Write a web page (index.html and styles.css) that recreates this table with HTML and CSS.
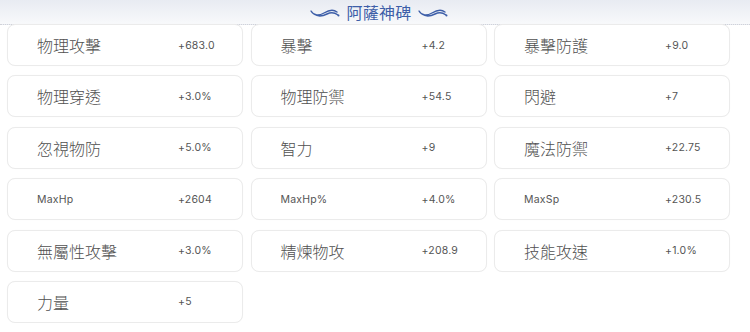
FILE: index.html
```html
<!DOCTYPE html>
<html>
<head>
<meta charset="utf-8">
<link rel="stylesheet" href="styles.css">
</head>
<body>
<div class="header">
  <svg class="swoosh" viewBox="0 0 30 12" width="30" height="12"><path d="M1 4 C4 9 9 9 14 6 C19 3 23 2 27 5 M4 7 C8 10 13 9 17 7 C21 5 24 5 28 8" fill="none" stroke="#3d5ea8" stroke-width="1.4" stroke-linecap="round"/><circle cx="28.5" cy="8.5" r="1" fill="#3d5ea8"/></svg>
  <span class="title">阿薩神碑</span>
  <svg class="swoosh" viewBox="0 0 30 12" width="30" height="12"><path d="M1 4 C4 9 9 9 14 6 C19 3 23 2 27 5 M4 7 C8 10 13 9 17 7 C21 5 24 5 28 8" fill="none" stroke="#3d5ea8" stroke-width="1.4" stroke-linecap="round"/><circle cx="28.5" cy="8.5" r="1" fill="#3d5ea8"/></svg>
</div>
<div class="grid">
  <div class="card"><span class="label">物理攻擊</span><span class="value">+683.0</span></div>
  <div class="card"><span class="label">暴擊</span><span class="value">+4.2</span></div>
  <div class="card"><span class="label">暴擊防護</span><span class="value">+9.0</span></div>
  <div class="card"><span class="label">物理穿透</span><span class="value">+3.0%</span></div>
  <div class="card"><span class="label">物理防禦</span><span class="value">+54.5</span></div>
  <div class="card"><span class="label">閃避</span><span class="value">+7</span></div>
  <div class="card"><span class="label">忽視物防</span><span class="value">+5.0%</span></div>
  <div class="card"><span class="label">智力</span><span class="value">+9</span></div>
  <div class="card"><span class="label">魔法防禦</span><span class="value">+22.75</span></div>
  <div class="card"><span class="label small">MaxHp</span><span class="value">+2604</span></div>
  <div class="card"><span class="label small">MaxHp%</span><span class="value">+4.0%</span></div>
  <div class="card"><span class="label small">MaxSp</span><span class="value">+230.5</span></div>
  <div class="card"><span class="label">無屬性攻擊</span><span class="value">+3.0%</span></div>
  <div class="card"><span class="label">精煉物攻</span><span class="value">+208.9</span></div>
  <div class="card"><span class="label">技能攻速</span><span class="value">+1.0%</span></div>
  <div class="card"><span class="label">力量</span><span class="value">+5</span></div>
</div>
</body>
</html>
```
FILE: styles.css
```css
html, body {
  margin: 0;
  padding: 0;
  background: #ffffff;
  font-family: "Noto Sans CJK TC", "Noto Sans", sans-serif;
}
.header {
  height: 25px;
  box-sizing: border-box;
  display: flex;
  align-items: center;
  justify-content: center;
  gap: 6px;
  background: linear-gradient(to bottom, #e8ebf2, #f8f9fb);
  border-bottom: 1px dotted #d0d2d8;
  padding-left: 8px;
}
.swoosh {
  display: block;
  margin-top: 2px;
}
.title {
  font-size: 16px;
  color: #3d5ea8;
  line-height: 24px;
  letter-spacing: 0.3px;
}
.grid {
  display: grid;
  grid-template-columns: repeat(3, 236px);
  grid-auto-rows: 42px;
  column-gap: 7.5px;
  row-gap: 9.4px;
  padding: 0 0 0 7px;
  margin-top: -1px;
}
.card {
  box-sizing: border-box;
  background: #ffffff;
  border: 1px solid #ebebeb;
  border-radius: 8px;
  box-shadow: 0 0 1px rgba(0, 0, 0, 0.04);
  display: flex;
  align-items: center;
  padding-left: 29px;
}
.label {
  font-size: 16px;
  font-weight: 300;
  color: #505050;
  width: 141px;
  flex: none;
}
.label.small {
  font-family: "Inter", "Noto Sans", sans-serif;
  font-size: 10.5px;
  font-weight: 400;
  color: #555555;
  letter-spacing: 0.2px;
}
.value {
  font-family: "Inter", "Noto Sans", sans-serif;
  font-size: 10.5px;
  color: #555555;
  letter-spacing: 0.2px;
}
```
